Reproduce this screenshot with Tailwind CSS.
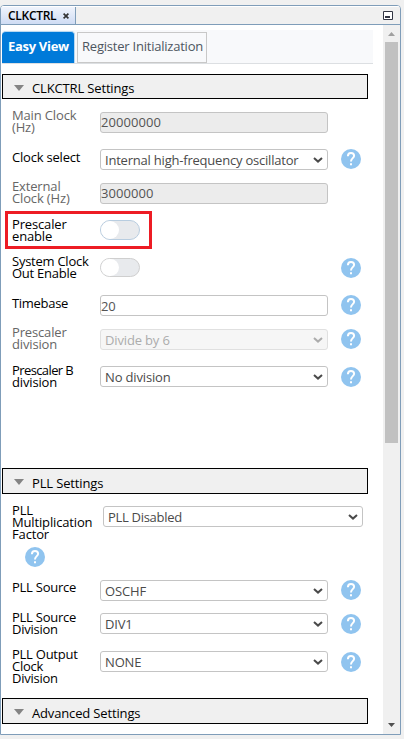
<!DOCTYPE html>
<html lang="en">
<head>
<meta charset="utf-8">
<title>CLKCTRL</title>
<script src="https://cdn.jsdelivr.net/npm/@tailwindcss/browser@4"></script>
</head>
<body class="w-[404px] h-[739px] overflow-hidden bg-[#f0f0f0] pt-[5px] font-['Open_Sans','Noto_Sans',sans-serif] text-[13px] tracking-[-0.15px] text-black">
<svg class="hidden">
  <symbol id="help" viewBox="0 0 20 20"><circle cx="10" cy="10" r="10" fill="#90c4ef"/><path d="M6.9 7.3C6.9 5.1 8.2 4 10 4s3.1 1.1 3.1 2.8c0 2.2-3.1 2.6-3.1 5.6" fill="none" stroke="#fff" stroke-width="2"/><path d="M9 14.2h2v2.1H9z" fill="#fff"/></symbol>
  <symbol id="chev" viewBox="0 0 10 6"><path d="M1 1l4 3.6L9 1" fill="none" stroke="currentColor" stroke-width="2"/></symbol>
</svg>
<div class="w-[401px] h-[730px] flex flex-col border border-[#7f9db9] rounded-t-[4px] bg-white overflow-hidden">
  <div class="h-[19px] shrink-0 flex justify-between bg-[#f0f0f0] border-t border-t-white border-b border-b-[#7f9db9]">
    <div class="w-[75px] flex items-center pl-[7px] bg-linear-to-b from-[#f0f4fc] to-[#cfdcf4] border-r border-[#7f9db9]">
      <span class="w-[55px] text-[12px] leading-[17px] font-semibold tracking-[-0.3px]">CLKCTRL</span>
      <svg class="w-[6px] h-[6px]" viewBox="0 0 6 6"><path d="M.6.6l4.8 4.8M5.4.6L.6 5.4" stroke="#333" stroke-width="1.7"/></svg>
    </div>
    <svg class="w-[10px] h-[9px] mt-[4px] mr-[7px]" viewBox="0 0 10 9"><path d="M.5.5h9v8h-9z" fill="#fff" stroke="#333644"/><path d="M2 5h5v2H2z" fill="#333644"/></svg>
  </div>
  <div class="flex flex-1 min-h-0">
    <main class="w-[382px] pl-px pt-[5px]">
      <nav class="w-[371px] h-[34px] flex bg-[#f8f9fb] border-b border-[#dcdfe2] pt-px">
        <div class="w-[73px] h-[32px] rounded-t-[4px] bg-[#007ad9] border-r border-t border-[#b9d8f0] pl-[6px] text-white text-[13px] font-bold leading-[29px] tracking-[-0.3px] whitespace-nowrap">Easy View</div>
        <div class="w-[130px] h-[31px] ml-[2px] mt-px border border-[#c8c8c8] pl-[4px] text-[#4d5660] leading-[27px] tracking-[-0.22px] whitespace-nowrap">Register Initialization</div>
      </nav>
      <div class="w-[366px] h-[25px] mt-[10px] mb-[10px] flex items-center border border-black bg-[#f0f0f0] pl-[11px]"><svg class="w-[10px] h-[6px] mt-[2px] mr-[8px]" viewBox="0 0 10 6"><path d="M0 0h10L5 6z" fill="#848484"/></svg><span class="pt-[3px] leading-[20px]">CLKCTRL Settings</span></div>
      <div class="h-[40px] pl-[10px] flex leading-[12px]"><div class="w-[88px] text-[#666]">Main Clock<br>(Hz)</div><div class="w-[228px] h-[21px] mt-[3px] border border-[#c4c4c4] rounded-[3px] bg-[#ececec] text-[#545454] leading-[19px] tracking-[0.05px]">20000000</div></div>
      <div class="h-[31px] pl-[10px] flex leading-[12px]"><div class="w-[88px] pt-[2px] tracking-[-0.2px]">Clock select</div><div class="w-[228px] h-[21px] flex justify-between border border-[#c4c4c4] rounded-[3px] pl-[4px] pr-[4px] text-[#4a4a4a] leading-[21px] tracking-[-0.21px] whitespace-nowrap">Internal high-frequency oscillator<svg class="w-[10px] h-[6px] mt-[7px]"><use href="#chev"/></svg></div><svg class="w-[20px] h-[20px] ml-[13px]"><use href="#help"/></svg></div>
      <div class="h-[38px] pl-[10px] flex leading-[12px]"><div class="w-[88px] text-[#666]">External<br>Clock (Hz)</div><div class="w-[228px] h-[21px] mt-[3px] border border-[#c4c4c4] rounded-[3px] bg-[#ececec] text-[#545454] leading-[19px] tracking-[0.05px]">3000000</div></div>
      <div class="relative h-[37px] pl-[10px] flex leading-[12px]"><div class="absolute left-[3px] top-[-7px] w-[147px] h-[38px] border-[3px] border-[#ed1c24]"></div><div class="w-[88px]">Prescaler<br>enable</div><div class="w-[40px] h-[20px] mt-[2px] border border-[#b8cde0] rounded-full bg-[#e8eaed]"><div class="w-[18px] h-[18px] rounded-full bg-white"></div></div></div>
      <div class="h-[40px] pl-[10px] flex leading-[12px]"><div class="w-[88px] tracking-[-0.25px]">System Clock<br>Out Enable</div><div class="w-[40px] h-[19px] mt-[3px] border border-[#cfcfcf] rounded-full bg-[#e8eaed]"><div class="w-[18px] h-[17px] rounded-full bg-white"></div></div><svg class="w-[20px] h-[20px] mt-[3px] ml-[201px]"><use href="#help"/></svg></div>
      <div class="h-[31px] pl-[10px] flex leading-[12px]"><div class="w-[88px] pt-[2px] tracking-[-0.3px]">Timebase</div><div class="w-[228px] h-[21px] border border-[#c4c4c4] rounded-[3px] text-[#545454] leading-[20px]">20</div><svg class="w-[20px] h-[20px] ml-[13px]"><use href="#help"/></svg></div>
      <div class="h-[38px] pl-[10px] flex leading-[12px]"><div class="w-[88px] text-[#666]">Prescaler<br>division</div><div class="w-[228px] h-[21px] mt-[3px] flex justify-between border border-[#e0e0e0] rounded-[3px] bg-[#f6f6f6] pl-[4px] pr-[4px] text-[#acacac] leading-[21px]">Divide by 6<svg class="w-[10px] h-[6px] mt-[7px]"><use href="#chev"/></svg></div><svg class="w-[20px] h-[20px] mt-[3px] ml-[13px]"><use href="#help"/></svg></div>
      <div class="h-[104px] pl-[10px] flex leading-[12px]"><div class="w-[88px] tracking-[-0.45px]"><span class="tracking-[-0.6px]">Prescaler B</span><br><span class="tracking-[-0.15px]">division</span></div><div class="w-[228px] h-[21px] mt-[2px] flex justify-between border border-[#c4c4c4] rounded-[3px] pl-[4px] pr-[4px] text-[#4a4a4a] leading-[21px]">No division<svg class="w-[10px] h-[6px] mt-[7px]"><use href="#chev"/></svg></div><svg class="w-[20px] h-[20px] mt-[3px] ml-[13px]"><use href="#help"/></svg></div>
      <div class="w-[366px] h-[26px] mb-[10px] flex items-center border border-black bg-[#f0f0f0] pl-[11px]"><svg class="w-[10px] h-[6px] mt-[2px] mr-[8px]" viewBox="0 0 10 6"><path d="M0 0h10L5 6z" fill="#848484"/></svg><span class="pt-[3px] leading-[20px]">PLL Settings</span></div>
      <div class="h-[76px] pl-[10px] flex leading-[12px]"><div class="w-[91px]">PLL<br>Multiplication<br>Factor<svg class="w-[20px] h-[20px] mt-[7px] ml-[13px]"><use href="#help"/></svg></div><div class="w-[260px] h-[21px] mt-[2px] flex justify-between border border-[#c4c4c4] rounded-[3px] pl-[4px] pr-[4px] text-[#4a4a4a] leading-[21px] tracking-[-0.3px]">PLL Disabled<svg class="w-[10px] h-[6px] mt-[7px]"><use href="#chev"/></svg></div></div>
      <div class="h-[31px] pl-[10px] flex leading-[12px]"><div class="w-[88px] pt-px tracking-[-0.25px]">PLL Source</div><div class="w-[228px] h-[21px] flex justify-between border border-[#c4c4c4] rounded-[3px] pl-[4px] pr-[4px] text-[#4a4a4a] leading-[21px]">OSCHF<svg class="w-[10px] h-[6px] mt-[7px]"><use href="#chev"/></svg></div><svg class="w-[20px] h-[20px] ml-[13px]"><use href="#help"/></svg></div>
      <div class="h-[37px] pl-[10px] flex leading-[12px]"><div class="w-[88px] tracking-[-0.25px]">PLL Source<br>Division</div><div class="w-[228px] h-[21px] mt-[2px] flex justify-between border border-[#c4c4c4] rounded-[3px] pl-[4px] pr-[4px] text-[#4a4a4a] leading-[21px]">DIV1<svg class="w-[10px] h-[6px] mt-[7px]"><use href="#chev"/></svg></div><svg class="w-[20px] h-[20px] mt-[3px] ml-[13px]"><use href="#help"/></svg></div>
      <div class="h-[50px] pl-[10px] flex leading-[12px]"><div class="w-[88px] tracking-[-0.25px]">PLL Output<br>Clock<br>Division</div><div class="w-[228px] h-[21px] mt-[3px] flex justify-between border border-[#c4c4c4] rounded-[3px] pl-[4px] pr-[4px] text-[#4a4a4a] leading-[21px]">NONE<svg class="w-[10px] h-[6px] mt-[7px]"><use href="#chev"/></svg></div><svg class="w-[20px] h-[20px] mt-[4px] ml-[13px]"><use href="#help"/></svg></div>
      <div class="w-[366px] h-[26px] flex items-center border border-black bg-[#f0f0f0] pl-[11px]"><svg class="w-[10px] h-[6px] mt-[2px] mr-[8px]" viewBox="0 0 10 6"><path d="M0 0h10L5 6z" fill="#848484"/></svg><span class="pt-[3px] leading-[20px]">Advanced Settings</span></div>
    </main>
    <div class="w-[17px] flex flex-col items-center justify-between bg-[#f0f0f0] pt-[7px] pb-[7px]">
      <div class="flex flex-col items-center"><svg class="w-[7px] h-[4px]" viewBox="0 0 7 4"><path d="M0 4h7L3.5 0z" fill="#a0a0a0"/></svg><div class="w-[13px] h-[401px] mt-[6px] bg-[#c1c1c1]"></div></div>
      <svg class="w-[7px] h-[4px]" viewBox="0 0 7 4"><path d="M0 0h7L3.5 4z" fill="#505050"/></svg>
    </div>
  </div>
</div>
</body>
</html>
